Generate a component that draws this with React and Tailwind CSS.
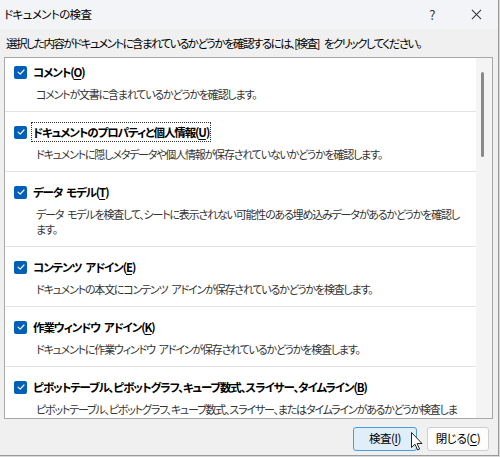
import React from 'react';

const items = [
  {
    title: 'コメント',
    key: 'O',
    desc: ['コメントが文書に含まれているかどうかを確認します。'],
  },
  {
    title: 'ドキュメントのプロパティと個人情報',
    key: 'U',
    desc: ['ドキュメントに隠しメタデータや個人情報が保存されていないかどうかを確認します。'],
    focused: true,
  },
  {
    title: 'データ モデル',
    key: 'T',
    desc: [
      'データ モデルを検査して、シートに表示されない可能性のある埋め込みデータがあるかどうかを確認し',
      'ます。',
    ],
  },
  {
    title: 'コンテンツ アドイン',
    key: 'E',
    desc: ['ドキュメントの本文にコンテンツ アドインが保存されているかどうかを検査します。'],
  },
  {
    title: '作業ウィンドウ アドイン',
    key: 'K',
    desc: ['ドキュメントに作業ウィンドウ アドインが保存されているかどうかを検査します。'],
  },
  {
    title: 'ピボットテーブル、ピボットグラフ、キューブ数式、スライサー、タイムライン',
    key: 'B',
    desc: [
      'ピボットテーブル、ピボットグラフ、キューブ数式、スライサー、またはタイムラインがあるかどうか検査しま',
      'す。これらには、シート上で非表示のデータが含まれる可能性があります。',
    ],
  },
];

// half-width spaces collapse with the tight tracking, so give them a fixed width
function Spaced({ text }) {
  const parts = text.split(' ');
  return parts.map((p, i) => (
    <React.Fragment key={i}>
      {i > 0 && <span className="inline-block w-[4px]" />}
      {p}
    </React.Fragment>
  ));
}

function CheckBox() {
  return (
    <span className="flex h-[13px] w-[13px] shrink-0 items-center justify-center rounded-[2px] bg-[#005fb8]">
      <svg viewBox="0 0 12 12" className="h-[10px] w-[10px]" fill="none">
        <path d="M2.5 6.2 L5 8.6 L9.6 3.6" stroke="white" strokeWidth="1.4" strokeLinecap="round" strokeLinejoin="round" />
      </svg>
    </span>
  );
}

function InspectItem({ item, first }) {
  return (
    <div className={'border-b border-[#e3e3e3] pb-[9px] pl-[9px] ' + (first ? 'pt-[4px]' : 'pt-[10px]')}>
      {/* checkbox + bold heading */}
      <div className="flex h-[20px] items-center">
        <CheckBox />
        <span
          className={
            'ml-[5px] whitespace-nowrap px-[1px] text-[11.5px] font-bold leading-[18px] tracking-[-1.1px] text-black ' +
            (item.focused ? 'outline-1 outline-dotted outline-[#333]' : 'outline-1 outline-transparent')
          }
        >
          <Spaced text={item.title} />(<span className="underline underline-offset-2">{item.key}</span>)
        </span>
      </div>
      <div className="mt-[5px] pl-[22px] text-[11px] leading-[15px] tracking-[-1.2px] text-[#333]">
        {item.desc.map((line, i) => (
          <div key={i} className="whitespace-nowrap">
            <Spaced text={line} />
          </div>
        ))}
      </div>
    </div>
  );
}

export default function App() {
  return (
    <div className="relative flex h-[457px] w-[500px] overflow-hidden bg-[#d9d9d9] font-['Noto_Sans_CJK_JP','Noto_Sans',sans-serif] [font-feature-settings:'palt']">
      <div className="flex h-[456px] w-[499px] flex-col border-r border-b border-[#9a9a9a] bg-[#f0f0f0]">
        {/* title bar */}
        <div className="flex h-[29px] items-center bg-[#f2f4f7] pl-[4px] text-[11.5px] tracking-[-0.6px] text-black">
          <span className="flex-1">ドキュメントの検査</span>
          <span className="w-[20px] text-center text-[13px] text-[#333]">?</span>
          <span className="ml-[24px] mr-[12px] flex w-[20px] justify-center">
            <svg viewBox="0 0 12 12" className="h-[11px] w-[11px]" fill="none">
              <path d="M1 1 L11 11 M11 1 L1 11" stroke="#333" strokeWidth="1.1" />
            </svg>
          </span>
        </div>

        {/* instruction */}
        <div className="whitespace-nowrap pl-[6px] pt-[6px] text-[11.5px] leading-[16px] tracking-[-1.55px] text-black">
          選択した内容がドキュメントに含まれているかどうかを確認するには、[検査]<span className="inline-block w-[5px]" />をクリックしてください。
        </div>

        {/* list box */}
        <div className="ml-[4px] mt-[6px] flex h-[362px] w-[489px] border border-[#a8a8a8] bg-white">
          <div className="flex-1 overflow-hidden">
            {items.map((it, i) => (
              <InspectItem key={i} item={it} first={i === 0} />
            ))}
          </div>
          <div className="flex w-[16px] justify-end bg-[#f4f4f4] pr-[8px] pt-[14px]">
            <div className="h-[85px] w-[3px] rounded-full bg-[#8a8a8a]" />
          </div>
        </div>

        {/* buttons */}
        <div className="mt-[8px] flex justify-end gap-[10px] pr-[9px]">
          <button className="h-[24px] w-[64px] whitespace-nowrap rounded-[3px] border border-[#4a9be0] bg-[#e0eefa] text-[11.5px] tracking-[-0.4px] text-black">
            検査(<span className="underline underline-offset-2">I</span>)
          </button>
          <button className="h-[24px] w-[62px] whitespace-nowrap rounded-[3px] border border-[#cfcfcf] bg-[#fdfdfd] text-[11.5px] tracking-[-0.4px] text-black">
            閉じる(<span className="underline underline-offset-2">C</span>)
          </button>
        </div>
      </div>

      {/* mouse pointer over the button */}
      <svg viewBox="0 0 12 19" className="absolute left-[411px] top-[432px] h-[19px] w-[12px]">
        <path d="M0.5 0.5 L0.5 15.5 L4 12.2 L6.6 18 L8.6 17.1 L6.1 11.5 L11 11.5 Z" fill="white" stroke="#222" strokeWidth="1" strokeLinejoin="round" />
      </svg>
    </div>
  );
}
